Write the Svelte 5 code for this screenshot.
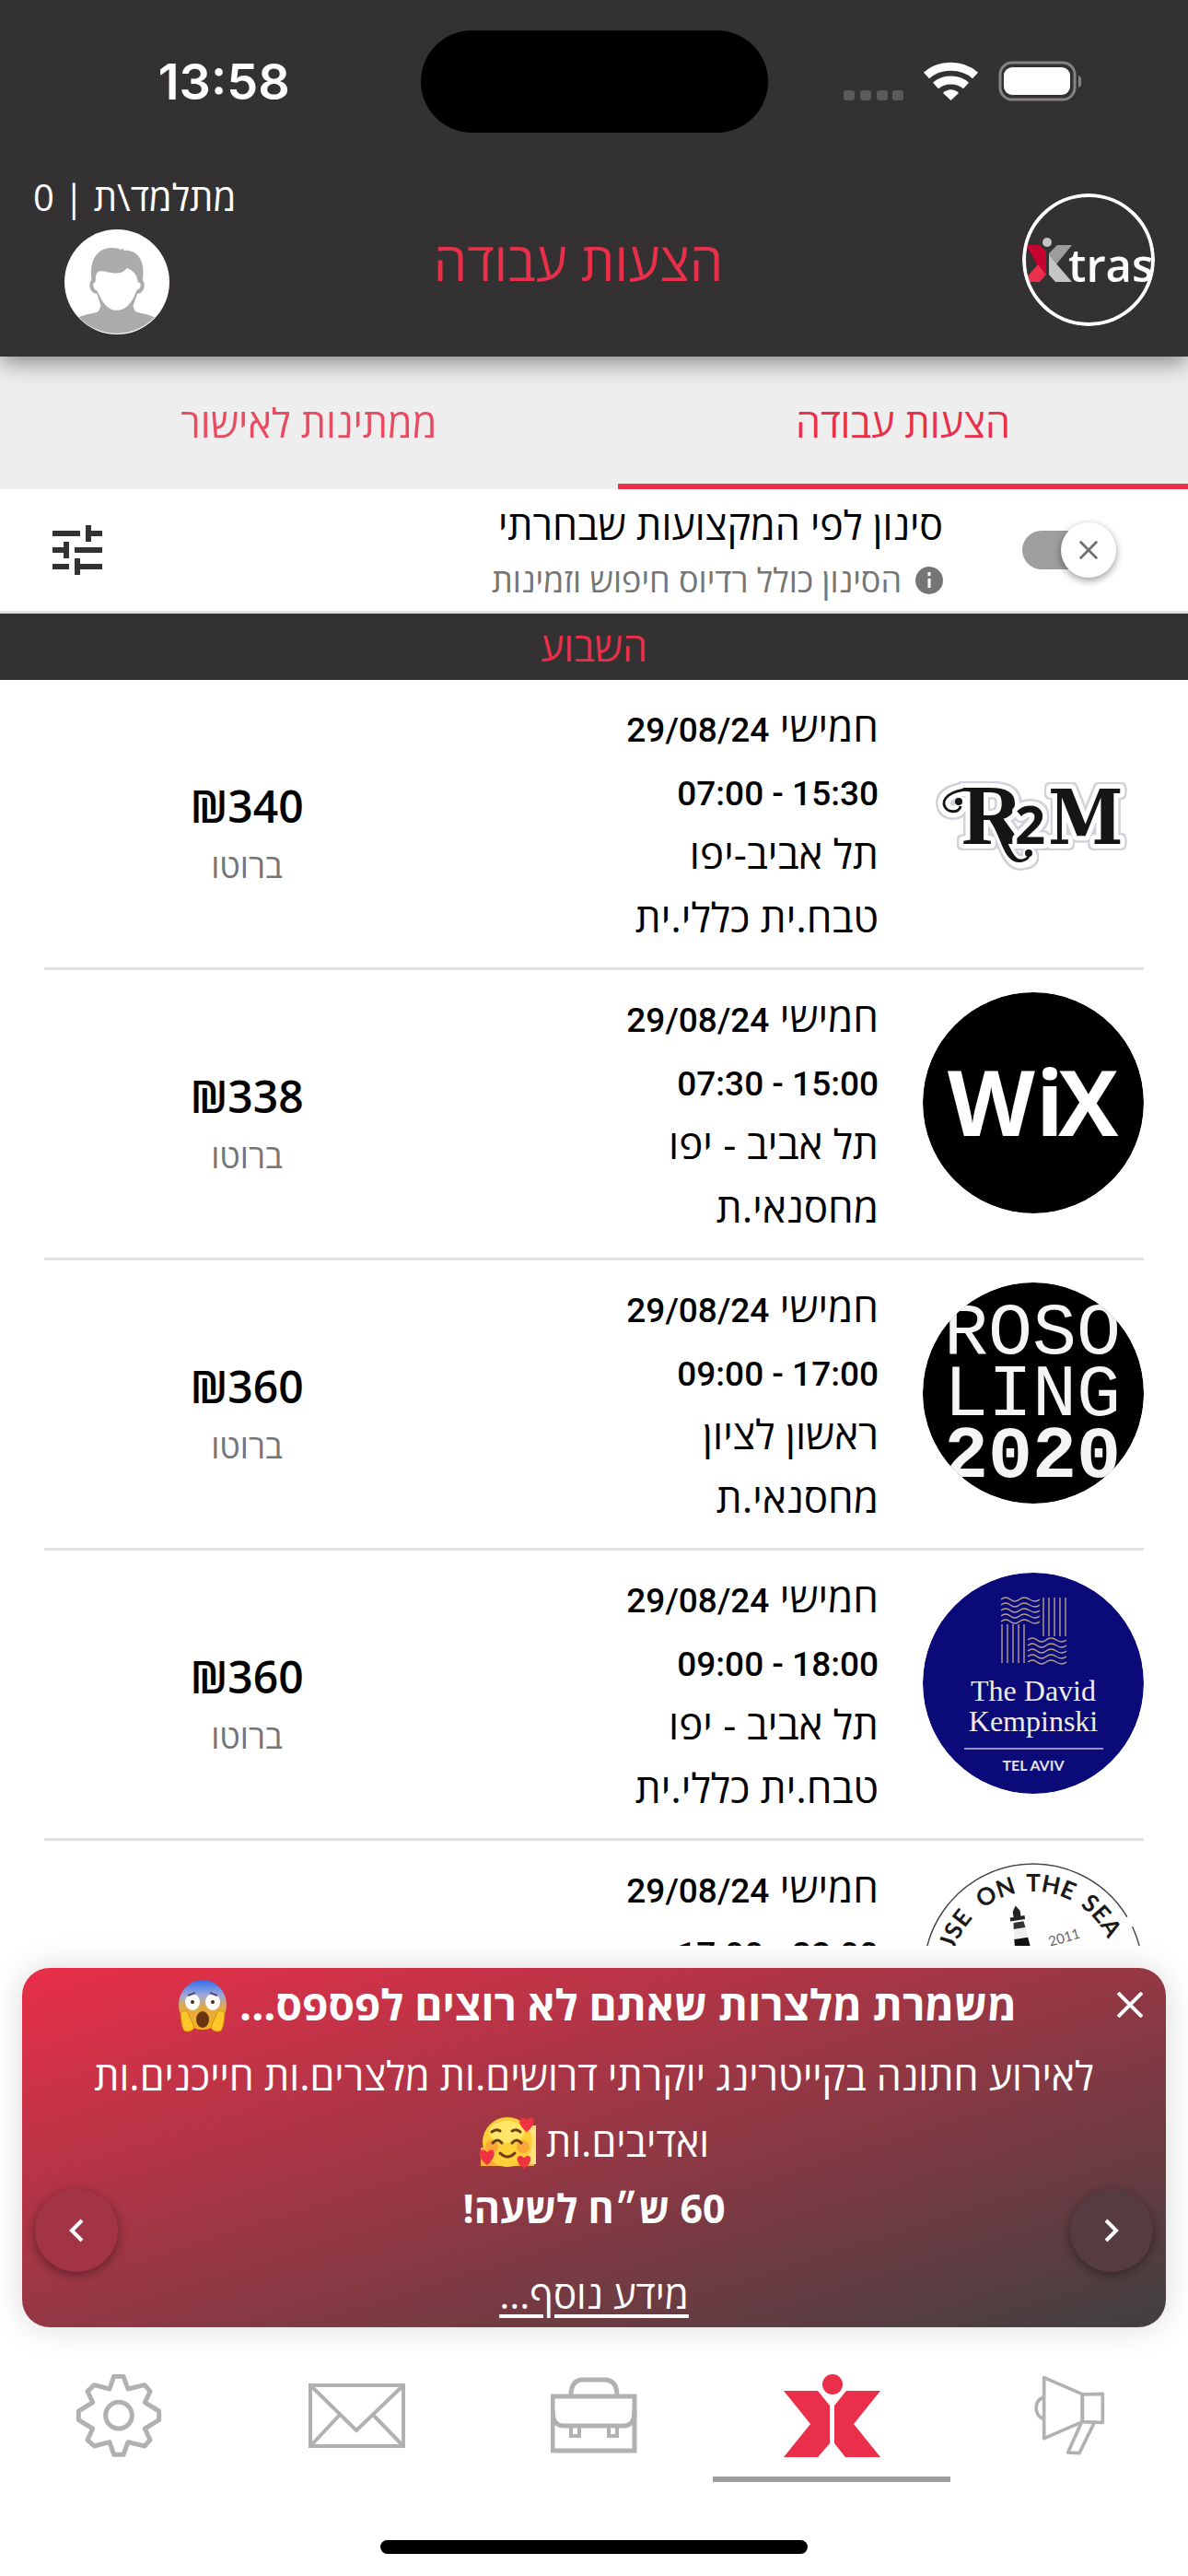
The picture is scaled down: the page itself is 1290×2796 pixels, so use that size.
<script lang="ts">
  type LogoName = 'r2m' | 'wix' | 'rosoling' | 'kempinski' | 'house';

  interface Job {
    logo: LogoName;
    date: string;
    hours: string;
    city: string;
    role: string;
    pay: string;
  }

  const jobs: Job[] = [
    { logo: 'r2m', date: '29/08/24', hours: '07:00 - 15:30', city: 'תל אביב-יפו', role: 'טבח.ית כללי.ית', pay: '₪340' },
    { logo: 'wix', date: '29/08/24', hours: '07:30 - 15:00', city: 'תל אביב - יפו', role: 'מחסנאי.ת', pay: '₪338' },
    { logo: 'rosoling', date: '29/08/24', hours: '09:00 - 17:00', city: 'ראשון לציון', role: 'מחסנאי.ת', pay: '₪360' },
    { logo: 'kempinski', date: '29/08/24', hours: '09:00 - 18:00', city: 'תל אביב - יפו', role: 'טבח.ית כללי.ית', pay: '₪360' },
    { logo: 'house', date: '29/08/24', hours: '17:00 - 23:00', city: '', role: '', pay: '' },
  ];

  const tabs = ['הצעות עבודה', 'ממתינות לאישור'];
  const navItems = [
    { id: 'news', label: 'עדכונים' },
    { id: 'jobs', label: 'הצעות עבודה' },
    { id: 'shifts', label: 'משמרות' },
    { id: 'mail', label: 'הודעות' },
    { id: 'settings', label: 'הגדרות' },
  ];

  let activeTab = $state(0);
  let activeNav = $state('jobs');
  let filterOn = $state(false);
  let bannerOpen = $state(true);
</script>

{#snippet logo(name: LogoName)}
  <svg class="logo" viewBox="0 0 240 240" aria-hidden="true">
    {#if name === 'r2m'}
      <g class="r2m">
        <g fill="none" stroke="#fff" stroke-width="13" stroke-linecap="round">
          <path d="M60 95 C38 93 22 101 23 111 C25 123 43 121 42 109" />
          <path d="M74 125 C88 143 92 174 106 174 C118 173 120 168 115 164" />
        </g>
        <text class="r2m-m" x="136" y="154">M</text>
        <text class="r2m-r" x="42" y="154">R</text>
        <text class="r2m-2" x="100" y="154">2</text>
        <path d="M60 95 C38 93 22 101 23 111 C25 121 40 121 41 113" fill="none" stroke="#151515" stroke-width="3" />
        <circle cx="39" cy="108" r="4" fill="#151515" />
        <path d="M70 125 C86 143 86 175 106 174 C114 173 118 168 116 164 C113 170 106 173 101 168 C92 158 88 135 74 125Z" fill="#151515" />
        <circle cx="115" cy="164" r="4" fill="#151515" />
      </g>
    {:else if name === 'wix'}
      <circle cx="120" cy="120" r="120" fill="#000" />
      <text class="wix" x="27" y="156">W</text>
      <text class="wix" x="123" y="156">i</text>
      <text class="wix" x="147" y="156">X</text>
    {:else if name === 'rosoling'}
      <circle cx="120" cy="120" r="120" fill="#000" />
      <text class="roso" x="23" y="77">ROSO</text>
      <text class="roso" x="23" y="144">LING</text>
      <text class="roso year" x="23" y="211">2020</text>
    {:else if name === 'kempinski'}
      <circle cx="120" cy="120" r="120" fill="#0a0a78" />
      <g fill="none" stroke="#b5a08c" stroke-width="1.4">
        {#each [0, 1, 2, 3, 4] as i}
          <path d="M85 {29 + i * 6} q5 -4 10 0 t10 0 t11 0 t11 0" />
          <path d="M114 {73 + i * 6} q5 -4 10 0 t10 0 t11 0 t11 0" />
          <path d="M{131 + i * 6} 27 V69" />
          <path d="M{86 + i * 6} 56 V98" />
        {/each}
      </g>
      <text class="kemp" x="120" y="139">The David</text>
      <text class="kemp" x="120" y="172">Kempinski</text>
      <path d="M45 191 H196" stroke="#9a93c0" stroke-width="2" />
      <text class="kemp-city" x="120" y="215">TEL AVIV</text>
    {:else}
      <circle cx="120" cy="120" r="119" fill="#fff" stroke="#444" stroke-width="1.5" stroke-dasharray="330 12 60 6 200 20" transform="rotate(170 120 120)" />
      <path id="seal-arc" d="M31 120 A89 89 0 0 1 209 120" fill="none" />
      <g class="seal">
        <text><textPath href="#seal-arc" startOffset="42">USE</textPath></text>
        <text><textPath href="#seal-arc" startOffset="101">ON</textPath></text>
        <text><textPath href="#seal-arc" startOffset="157">THE</textPath></text>
        <text><textPath href="#seal-arc" startOffset="217">SEA</textPath></text>
      </g>
      <g transform="rotate(-9 106 80)">
        <path d="M102 52 L106 46 L110 52 V58 H114 V62 H98 V58 H102Z" fill="#222" />
        <path d="M101 64 H112 L113 71 H100Z" fill="#333" />
        <path d="M100 72 H113 L114 81 H99Z" fill="#eee" />
        <path d="M99 82 H114 L116 104 H97Z" fill="#111" />
      </g>
      <text class="seal-year" x="155" y="86" transform="rotate(-16 155 86)">2011</text>
    {/if}
  </svg>
{/snippet}

{#snippet navIcon(id: string)}
  {#if id === 'news'}
    <svg width="78" height="88" viewBox="60 36 234 264" fill="none" stroke="#b1b1b1" stroke-width="11" stroke-linejoin="round">
      <path d="M95 44 L220 98 V188 L95 242Z" />
      <path d="M220 99 L286 97 V190 L220 188Z" />
      <path d="M216 192 L173 288 L210 290 L258 192" />
      <path d="M92 108 C62 122 62 164 92 178" />
    </svg>
  {:else if id === 'jobs'}
    <svg width="105" height="90" viewBox="0 0 105 90" fill="#e92f49">
      <circle cx="53" cy="11" r="11" />
      <path d="M0 18 H37 L50 34 V75 L37 90 H0 L29 54Z" />
      <path d="M105 18 H68 L55 34 V75 L67 90 H105 L76 54Z" />
    </svg>
  {:else if id === 'shifts'}
    <svg width="94" height="84" viewBox="0 0 94 84" fill="none" stroke="#b1b1b1" stroke-width="5">
      <path d="M2 21 H91 V80 H2Z" />
      <path d="M22 20 C22 8 27 3 35 3 H58 C67 3 72 8 72 20" />
      <path d="M2 36 C2 48 6 53 14 53 H79 C87 53 91 48 91 36" />
      <path d="M22 54 V64 H31 V54 M63 54 V64 H72 V54" stroke-width="4" />
    </svg>
  {:else if id === 'mail'}
    <svg width="105" height="70" viewBox="0 0 105 70" fill="none" stroke="#b1b1b1" stroke-width="4">
      <path d="M2 2 H103 V68 H2Z" />
      <path d="M3 3 L52 51 L102 3 M3 67 L33 35 M102 67 L71 35" />
    </svg>
  {:else}
    <svg width="94" height="90" viewBox="36 36 282 270" fill="none" stroke="#b1b1b1" stroke-width="15" stroke-linejoin="round">
      <path d="M161 43 H192 L207 84 L261 71 L279 92 L262 128 L308 156 V185 L262 213 L279 250 L261 270 L207 257 L192 298 H161 L147 257 L97 270 L75 250 L92 213 L46 185 V156 L92 128 L75 92 L97 71 L147 84Z" />
      <circle cx="177" cy="170" r="43" />
    </svg>
  {/if}
{/snippet}

<div class="app" dir="rtl">
  <header class="header">
    <div class="status" dir="ltr">
      <span class="clock">13:58</span>
      <span class="island"></span>
      <svg class="indicators" width="260" height="48" viewBox="0 0 260 48" aria-hidden="true">
        <g fill="#5b595a">
          <rect x="2" y="33" width="12" height="11" rx="3" />
          <rect x="20" y="33" width="12" height="11" rx="3" />
          <rect x="38" y="33" width="12" height="11" rx="3" />
          <rect x="55" y="33" width="12" height="11" rx="3" />
        </g>
        <g fill="none" stroke="#fff" stroke-width="9">
          <path d="M92 17 C106 4 131 4 145 17" />
          <path d="M102 28 C111 20 126 20 135 28" />
        </g>
        <path d="M110 36 C115 31 122 31 127 36 L118.500 44Z" fill="#fff" />
        <rect x="172" y="3" width="81" height="40" rx="13" fill="none" stroke="#858384" stroke-width="3" />
        <rect x="176" y="8" width="72" height="30" rx="9" fill="#fff" />
        <path d="M257 17 C262 19 262 28 257 30Z" fill="#858384" />
      </svg>
    </div>

    <div class="bar">
      <svg class="brand" width="144" height="144" viewBox="0 0 144 144" role="img" aria-label="Xtras">
        <path d="M4 56 H19 L26 63 V88 L16 77Z" fill="#c4042f" />
        <path d="M17 77 L26 88 L19 96 H6 L4 92Z" fill="#e92f49" />
        <path d="M54 56 H38 L29 65 V68 L37 77Z" fill="#9c9c9c" />
        <path d="M29 67 L54 96 H36 L29 88Z" fill="#c4c4c4" />
        <circle cx="27" cy="53" r="5" fill="#c4c4c4" />
        <text x="50" y="96">tras</text>
        <circle cx="72" cy="72" r="70" fill="none" stroke="#fff" stroke-width="4" />
      </svg>
      <h1>הצעות עבודה</h1>
      <div class="user">
        <span>מתלמד\ת | 0</span>
        <svg class="avatar" width="114" height="114" viewBox="0 0 340 340" aria-hidden="true">
          <circle cx="170" cy="170" r="170" fill="#fff" />
          <path d="M46 284 C70 274 94 272 108 267 C114 260 114 254 118 248 L105 208 C84 208 74 178 88 164 C80 110 100 62 150 60 C165 59 175 62 183 66 L192 60 L190 68 C240 64 262 104 253 164 C266 178 256 208 236 208 L222 248 C226 256 226 262 232 267 C250 272 270 274 292 284 A170 170 0 0 1 46 284Z" fill="#ababab" />
          <path d="M101 158 C102 130 120 134 138 138 C160 142 184 148 202 125 C222 132 236 146 238 172 C252 168 248 196 234 196 C226 222 206 262 170 262 C136 262 118 226 106 198 C90 196 90 166 100 172Z" fill="#fff" />
        </svg>
      </div>
    </div>
  </header>

  <div class="tabs" role="tablist">
    {#each tabs as tab, i}
      <button class="tab" class:active={activeTab === i} role="tab" aria-selected={activeTab === i} onclick={() => (activeTab = i)}>{tab}</button>
    {/each}
  </div>

  <section class="filter">
    <span class="switch">
      <input id="filter" type="checkbox" bind:checked={filterOn} />
      <span class="thumb">
        <svg width="22" height="22" viewBox="0 0 24 24" stroke="#6f6f6f" stroke-width="3"><path d="M2 2 L22 22 M22 2 L2 22" /></svg>
      </span>
    </span>
    <label class="filter-text" for="filter">
      <span class="filter-title">סינון לפי המקצועות שבחרתי</span>
      <span class="filter-sub">
        <svg width="30" height="30" viewBox="0 0 30 30" aria-hidden="true">
          <circle cx="15" cy="15" r="15" fill="#757575" />
          <path d="M15 6 V10 M15 13 V23" stroke="#fff" stroke-width="3" />
        </svg>
        הסינון כולל רדיוס חיפוש וזמינות
      </span>
    </label>
    <button class="tune" aria-label="סינון">
      <svg width="54" height="54" viewBox="0 0 18 18" fill="#333132">
        <path d="M0 14v2h6v-2H0zM0 2v2h10V2H0zm10 16v-2h8v-2h-8v-2H8v6h2zM4 6v2H0v2h4v2h2V6H4zm14 4V8H8v2h10zm-6-4h2V4h4V2h-4V0h-2v6z" />
      </svg>
    </button>
  </section>

  <h2 class="section-title">השבוע</h2>

  <ul class="jobs">
    {#each jobs as job}
      <li class="job">
        {@render logo(job.logo)}
        <div class="details">
          <span>חמישי <bdi class="num">{job.date}</bdi></span>
          <span><bdi class="num" dir="ltr">{job.hours}</bdi></span>
          <span>{job.city}</span>
          <span>{job.role}</span>
        </div>
        {#if job.pay}
          <div class="pay">
            <strong>{job.pay}</strong>
            <span>ברוטו</span>
          </div>
        {/if}
      </li>
    {/each}
  </ul>

  {#if bannerOpen}
    <aside class="banner">
      <h3>
        משמרת מלצרות שאתם לא רוצים לפספס...
        <svg class="emoji" viewBox="0 0 56 56" role="img" aria-label="😱">
          <defs>
            <linearGradient id="scream" x1="0" y1="0" x2="0" y2="1">
              <stop offset="0" stop-color="#2d6be8" />
              <stop offset="0.300" stop-color="#9aa9e0" />
              <stop offset="0.550" stop-color="#e0a948" />
              <stop offset="1" stop-color="#f5b51c" />
            </linearGradient>
          </defs>
          <ellipse cx="28" cy="27" rx="26" ry="27" fill="url(#scream)" />
          <ellipse cx="17" cy="24" rx="8" ry="9" fill="#fff" />
          <ellipse cx="39" cy="24" rx="8" ry="9" fill="#fff" />
          <circle cx="17" cy="24" r="2" fill="#4a2a12" />
          <circle cx="39" cy="24" r="2" fill="#4a2a12" />
          <path d="M20 14 L12 17 M36 14 L44 17" stroke="#5a4a70" stroke-width="2" />
          <ellipse cx="28" cy="43" rx="7" ry="9" fill="#6b3410" />
          <path d="M4 36 C8 32 12 33 13 38 L18 48 C20 54 16 56 10 56 C5 55 5 44 4 36Z" fill="#ffc629" stroke="#d98d12" />
          <path d="M52 36 C48 32 44 33 43 38 L38 48 C36 54 40 56 46 56 C51 55 51 44 52 36Z" fill="#ffc629" stroke="#d98d12" />
        </svg>
      </h3>
      <p>
        לאירוע חתונה בקייטרינג יוקרתי דרושים.ות מלצרים.ות חייכנים.ות<br />
        ואדיבים.ות
        <svg class="emoji love" viewBox="0 0 62 56" role="img" aria-label="🥰">
          <path d="M2 34 H60 V54 H2Z" fill="#f7a93a" />
          <path d="M40 10 H62 V52 H40Z" fill="#ffe07a" />
          <circle cx="31" cy="28" r="27" fill="#ffcf3a" />
          <ellipse cx="30" cy="17" rx="19" ry="12" fill="#ffe668" />
          <circle cx="14" cy="33" r="7" fill="#f9963b" opacity="0.700" />
          <circle cx="48" cy="33" r="7" fill="#f9963b" opacity="0.700" />
          <g fill="none" stroke="#6b3c12" stroke-width="3" stroke-linecap="round">
            <path d="M14 17 q5 -4 9 -1 M36 16 q5 -3 9 1" />
            <path d="M15 29 q5 -6 10 0 M36 29 q5 -6 10 0" />
            <path d="M23 40 q8 8 16 0" />
          </g>
          <g fill="#ef3340">
            <path d="M52 17 C38 6 46 -3 52 4 C58 -3 66 6 52 17Z" />
            <path d="M9 53 C-6 41 3 32 9 39 C15 32 23 41 9 53Z" />
            <path d="M49 57 C36 47 43 39 49 45 C55 39 62 47 49 57Z" />
          </g>
        </svg>
      </p>
      <p class="rate">60 ש״ח לשעה!</p>
      <a href="#more">מידע נוסף...</a>
      <button class="close" aria-label="סגירה" onclick={() => (bannerOpen = false)}>
        <svg width="28" height="28" viewBox="0 0 28 28" stroke="#fff" stroke-width="4"><path d="M1 1 L27 27 M27 1 L1 27" /></svg>
      </button>
      <button class="arrow prev" aria-label="הקודם">
        <svg width="16" height="26" viewBox="0 0 16 26" fill="none" stroke="#fff" stroke-width="4"><path d="M2 2 L13 13 L2 24" /></svg>
      </button>
      <button class="arrow next" aria-label="הבא">
        <svg width="16" height="26" viewBox="0 0 16 26" fill="none" stroke="#fff" stroke-width="4"><path d="M14 2 L3 13 L14 24" /></svg>
      </button>
    </aside>
  {/if}

  <nav class="nav">
    {#each navItems as item}
      <button class="nav-item" class:active={activeNav === item.id} aria-label={item.label} onclick={() => (activeNav = item.id)}>
        {@render navIcon(item.id)}
      </button>
    {/each}
  </nav>
  <div class="home"></div>
</div>

<style>
  :global(body) {
    margin: 0;
    background: #fff;
  }

  .app {
    --accent: #e92f49;
    --dark: #333132;
    --line: #e0e0e0;
    display: flex;
    flex-direction: column;
    height: 100vh;
    overflow: hidden;
    background: #fff;
    color: #000;
    font-family: 'Open Sans', 'Liberation Sans', sans-serif;
    font-size: 43px;
  }

  h1,
  h2,
  h3,
  p,
  ul {
    margin: 0;
    padding: 0;
    font-weight: 400;
  }

  button {
    display: flex;
    align-items: center;
    justify-content: center;
    padding: 0;
    border: none;
    background: none;
    color: inherit;
    font: inherit;
    cursor: pointer;
  }

  svg {
    display: block;
    flex-shrink: 0;
    direction: ltr;
  }

  .header {
    position: relative;
    z-index: 1;
    flex-shrink: 0;
    background: var(--dark);
    color: #fff;
    box-shadow: 0 6px 24px rgba(0, 0, 0, 0.45);
  }

  .status {
    display: grid;
    grid-template-columns: 1fr auto 1fr;
    align-items: center;
    height: 177px;
  }

  .clock {
    padding-left: 30px;
    text-align: center;
    font-family: Inter, sans-serif;
    font-size: 54px;
    font-weight: 600;
  }

  .island {
    width: 377px;
    height: 111px;
    border-radius: 56px;
    background: #000;
  }

  .indicators {
    justify-self: center;
    margin-right: 36px;
  }

  .bar {
    display: grid;
    grid-template-columns: 1fr auto 1fr;
    align-items: center;
    height: 210px;
    padding: 0 36px;
  }

  .brand {
    border-radius: 50%;
    overflow: hidden;
  }

  .brand text {
    fill: #fff;
    font-family: 'Open Sans', sans-serif;
    font-size: 49px;
    font-weight: 600;
  }

  h1 {
    padding-inline-start: 34px;
    color: var(--accent);
    font-size: 58px;
  }

  .user {
    display: flex;
    flex-direction: column;
    align-items: flex-end;
    padding-bottom: 14px;
    font-size: 40px;
    line-height: 54px;
  }

  .avatar {
    margin: 8px 0 0 34px;
  }

  .tabs {
    display: flex;
    flex-shrink: 0;
    height: 144px;
    background: #eee;
    color: var(--accent);
  }

  .tab {
    flex: 1 1 auto;
    width: 48%;
    padding-top: 4px;
    border-bottom: 6px solid transparent;
    opacity: 0.85;
  }

  .tab:last-child {
    width: 52%;
  }

  .tab.active {
    border-color: var(--accent);
    opacity: 1;
  }

  .filter {
    display: flex;
    align-items: center;
    flex-shrink: 0;
    height: 132px;
    padding: 0 78px 0 57px;
    border-bottom: 3px solid var(--line);
  }

  .switch {
    position: relative;
    display: flex;
    align-items: center;
    justify-content: flex-end;
    width: 102px;
    height: 60px;
  }

  .switch input {
    width: 86px;
    height: 42px;
    margin: 0;
    border-radius: 21px;
    background: #9e9e9e;
    appearance: none;
  }

  .switch input:checked {
    background: var(--accent);
  }

  .thumb {
    position: absolute;
    top: 0;
    right: 0;
    display: flex;
    align-items: center;
    justify-content: center;
    width: 60px;
    height: 60px;
    border-radius: 50%;
    background: #fff;
    box-shadow: 0 3px 9px rgba(0, 0, 0, 0.4);
    pointer-events: none;
  }

  .switch input:checked + .thumb {
    right: auto;
    left: 0;
  }

  .filter-text {
    flex: 1;
    margin-inline-start: 86px;
    padding-top: 6px;
  }

  .filter-title {
    display: block;
    line-height: 60px;
  }

  .filter-sub {
    display: flex;
    align-items: center;
    gap: 15px;
    color: #757575;
    font-size: 36px;
    line-height: 60px;
  }

  .section-title {
    flex-shrink: 0;
    background: var(--dark);
    color: var(--accent);
    font-size: 43px;
    line-height: 72px;
    text-align: center;
  }

  .jobs {
    flex: 1;
    min-height: 0;
    overflow: hidden;
    list-style: none;
  }

  .job {
    display: grid;
    grid-template-columns: 240px 1fr 440px;
    gap: 0 48px;
    height: 312px;
    margin: 0 48px;
    border-bottom: 3px solid var(--line);
  }

  .logo {
    width: 240px;
    height: 240px;
    margin-top: 24px;
    border-radius: 50%;
    overflow: hidden;
  }

  .details {
    display: flex;
    flex-direction: column;
    padding-top: 16px;
    font-size: 44px;
    font-weight: 500;
    line-height: 69px;
  }

  .num {
    font-family: Roboto, sans-serif;
    font-size: 37px;
    line-height: 1;
  }

  .pay {
    display: flex;
    flex-direction: column;
    justify-content: center;
    padding-top: 26px;
    text-align: center;
    line-height: 65px;
  }

  .pay strong {
    font-size: 48px;
    font-weight: 600;
  }

  .pay span {
    color: #757575;
    font-size: 36px;
  }

  .r2m {
    filter: drop-shadow(2px 0 0 #d2d0d9) drop-shadow(-2px 0 0 #d2d0d9) drop-shadow(0 2px 0 #d2d0d9) drop-shadow(0 -2px 0 #d2d0d9);
  }

  .r2m text {
    fill: #151515;
    stroke: #fff;
    stroke-width: 10px;
    stroke-linejoin: round;
    paint-order: stroke;
    font-weight: 700;
  }

  .r2m-r {
    font-family: 'Liberation Serif', serif;
    font-size: 94px;
  }

  .r2m-2 {
    font-family: 'Open Sans', sans-serif;
    font-size: 58px;
  }

  .r2m-m {
    font-family: 'DejaVu Serif Condensed', 'DejaVu Serif', serif;
    font-size: 82px;
  }

  .wix {
    fill: #fff;
    font-family: 'Open Sans', sans-serif;
    font-size: 98px;
    font-weight: 700;
  }

  .roso {
    fill: #f5f5f5;
    font-family: 'Liberation Mono', monospace;
    font-size: 80px;
  }

  .year {
    font-weight: 700;
  }

  .kemp {
    fill: #f0ece6;
    font-family: 'Liberation Serif', serif;
    font-size: 32px;
    text-anchor: middle;
  }

  .kemp-city {
    fill: #e6e2e6;
    font-family: Lato, sans-serif;
    font-size: 16px;
    font-weight: 700;
    text-anchor: middle;
  }

  .seal text {
    fill: #1a1a1a;
    font-family: Lato, sans-serif;
    font-size: 26px;
    font-weight: 700;
    text-anchor: middle;
  }

  .seal-year {
    fill: #666;
    font-family: Lato, sans-serif;
    font-size: 15px;
    text-anchor: middle;
  }

  .banner {
    position: relative;
    flex-shrink: 0;
    margin: 24px 24px 0;
    border-radius: 30px;
    background: linear-gradient(to bottom right, #e92f49, #404040);
    box-shadow: 0 0 36px rgba(0, 0, 0, 0.15);
    color: #fff;
    text-align: center;
    line-height: 72px;
  }

  .banner h3 {
    margin-bottom: 3px;
    font-size: 46px;
    font-weight: 700;
    line-height: 78px;
  }

  .banner .rate {
    margin-bottom: 21px;
    font-weight: 700;
  }

  .banner a {
    display: block;
    color: inherit;
    font-size: 42px;
    text-underline-offset: 6px;
  }

  .emoji {
    display: inline-block;
    width: 56px;
    height: 56px;
    margin-inline-start: 6px;
    overflow: visible;
    vertical-align: -12px;
  }

  .love {
    width: 62px;
    margin-inline-start: 0;
  }

  .close {
    position: absolute;
    top: 26px;
    right: 25px;
  }

  .arrow {
    position: absolute;
    bottom: 60px;
    width: 90px;
    height: 90px;
    border-radius: 50%;
    box-shadow: 0 3px 12px rgba(0, 0, 0, 0.4);
  }

  .prev {
    right: 14px;
    background: #563c40;
  }

  .next {
    left: 14px;
    background: #a23445;
  }

  .nav {
    display: flex;
    flex-shrink: 0;
    margin-top: 24px;
  }

  .nav-item {
    flex: 1;
    height: 144px;
    border: solid transparent;
    border-width: 6px 0;
  }

  .nav-item.active {
    border-bottom-color: #9e9e9e;
  }

  .home {
    flex-shrink: 0;
    width: 36%;
    height: 15px;
    margin: 63px auto 24px;
    border-radius: 8px;
    background: #000;
  }
</style>
